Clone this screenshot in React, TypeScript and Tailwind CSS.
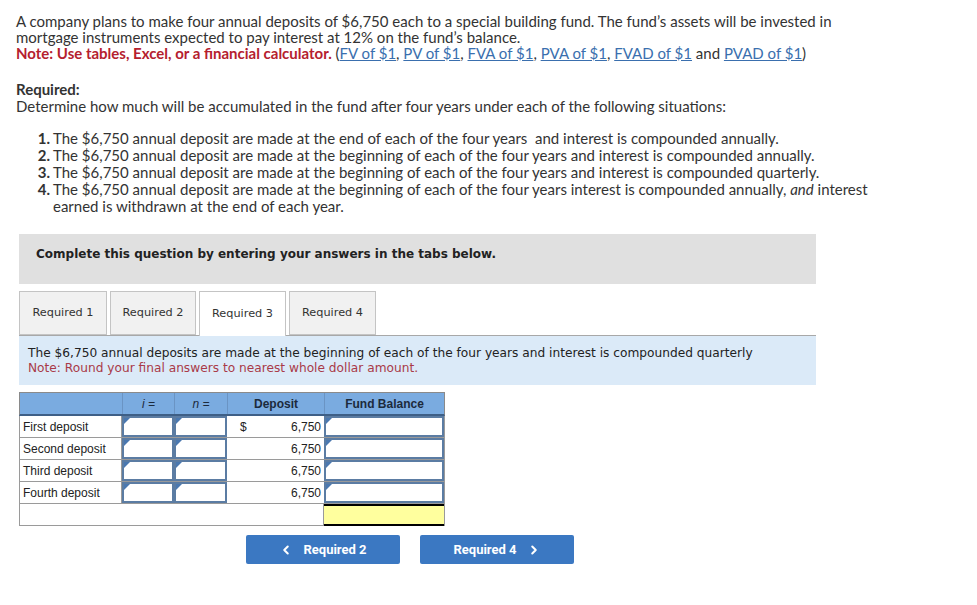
import { ChevronLeft, ChevronRight } from 'lucide-react';

const situations = [
  <>The $6,750 annual deposit are made at the end of each of the four years&nbsp; and interest is compounded annually.</>,
  <>The $6,750 annual deposit are made at the beginning of each of the four years and interest is compounded annually.</>,
  <>The $6,750 annual deposit are made at the beginning of each of the four years and interest is compounded quarterly.</>,
  <>
    The $6,750 annual deposit are made at the beginning of each of the four years interest is compounded annually, <i>and</i> interest
    <br />
    earned is withdrawn at the end of each year.
  </>,
];

const links = ['FV of $1', 'PV of $1', 'FVA of $1', 'PVA of $1', 'FVAD of $1', 'PVAD of $1'];

const rows = ['First deposit', 'Second deposit', 'Third deposit', 'Fourth deposit'];

function InputCell() {
  return (
    <div className="relative border-2 border-[#5b7ca3] bg-white">
      <div className="absolute left-0 top-0 w-0 h-0 border-t-[6px] border-t-[#4a78b0] border-r-[6px] border-r-transparent" />
    </div>
  );
}

function Tab({ label, active = false }: { label: string; active?: boolean }) {
  return (
    <div
      className={`h-[44px] flex items-center justify-center border border-[#c4c4c4] ${
        active ? 'bg-white border-b-0 h-[45px] -mb-px relative z-10' : 'bg-[#f1f1f1]'
      }`}
    >
      {label}
    </div>
  );
}

export default function App() {
  return (
    <div className="w-[977px] h-[605px] bg-white text-[#333] overflow-hidden">
      {/* problem text */}
      <div className="pl-4 pt-[13px] font-['Lato',sans-serif] text-[15px] leading-4">
        <p>
          A company plans to make four annual deposits of $6,750 each to a special building fund. The fund’s assets will be invested in
          <br />
          mortgage instruments expected to pay interest at 12% on the fund’s balance.
          <br />
          <b className="text-[#b5202e]">Note: Use tables, Excel, or a financial calculator.</b>{' '}
          (
          {links.map((l, i) => (
            <span key={l}>
              <span className="text-[#3a6fae] underline">{l}</span>
              {i < links.length - 2 ? ', ' : i === links.length - 2 ? ' and ' : ''}
            </span>
          ))}
          )
        </p>
        <p className="mt-[20px] font-bold leading-[17px]">Required:</p>
        <p className="leading-[17px]">Determine how much will be accumulated in the fund after four years under each of the following situations:</p>
        <ol className="mt-[15px] leading-[17px]">
          {situations.map((s, i) => (
            <li key={i} className="grid grid-cols-[37px_1fr]">
              <span className="font-bold text-right pr-[3px]">{i + 1}.</span>
              <span>{s}</span>
            </li>
          ))}
        </ol>
      </div>

      {/* question box */}
      <div className="ml-[19px] w-[797px] mt-[19px] h-[50px] bg-[#e0e0e0] pt-[13px] pl-[17px] font-['DejaVu_Sans',sans-serif] text-[12px] leading-[15px] font-bold text-[#222]">
        Complete this question by entering your answers in the tabs below.
      </div>

      {/* tabs */}
      <div className="ml-[19px] w-[797px] mt-[7px] flex gap-[3px] font-['DejaVu_Sans',sans-serif] text-[11.3px] text-[#333]">
        <div className="w-[88px]">
          <Tab label="Required 1" />
        </div>
        <div className="w-[86px]">
          <Tab label="Required 2" />
        </div>
        <div className="w-[87px]">
          <Tab label="Required 3" active />
        </div>
        <div className="w-[87px]">
          <Tab label="Required 4" />
        </div>
      </div>
      <div className="ml-[19px] w-[797px] h-[50px] bg-[#dbeaf8] border-t border-[#a8a8a8] pt-[10px] pl-[9px] font-['DejaVu_Sans',sans-serif] text-[12.2px] leading-[15px]">
        <p className="text-[#222]">
          The $6,750 annual deposits are made at the beginning of each of the four years and interest is compounded quarterly
        </p>
        <p className="text-[#a93a48]">Note: Round your final answers to nearest whole dollar amount.</p>
      </div>

      {/* table */}
      <div className="ml-[19px] mt-[7px] w-[426px] font-['Liberation_Sans',Arial,sans-serif] text-[12px] text-[#222]">
        <div className="grid grid-cols-[103px_52px_53px_97px_119px] h-[24px] bg-[#7aabe0] border border-[#8a8a8a] border-b-2 border-b-[#3e5f86] font-bold text-[#1c2a3c]">
          <div className="border-r border-[#6a94c4]" />
          <div className="border-r border-[#6a94c4] flex items-center justify-center font-normal italic">i =</div>
          <div className="border-r border-[#6a94c4] flex items-center justify-center font-normal italic">n =</div>
          <div className="border-r border-[#6a94c4] flex items-center justify-center">Deposit</div>
          <div className="flex items-center justify-center">Fund Balance</div>
        </div>
        {rows.map((r, i) => (
          <div key={r} className="grid grid-cols-[102px_52px_53px_97px_120px] h-[22px] border-l border-r border-b border-[#9a9a9a]">
            <div className="flex items-center pl-[3px] border-r border-[#9a9a9a]">{r}</div>
            <InputCell />
            <InputCell />
            <div className="flex items-center justify-between pl-[13px] pr-[3px]">
              <span>{i === 0 ? '$' : ''}</span>
              <span>6,750</span>
            </div>
            <InputCell />
          </div>
        ))}
        <div className="grid grid-cols-[304px_120px] h-[22px] border-l border-r border-b border-[#9a9a9a]">
          <div className="border-r border-[#9a9a9a]" />
          <div className="bg-[#ffff9e] border-t-2 border-b-2 border-black -mb-px" />
        </div>
      </div>

      {/* nav buttons */}
      <div className="ml-[246px] mt-[9px] flex gap-[20px] font-['Roboto',sans-serif] text-[13px] font-bold text-white">
        <div className="w-[154px] h-[29px] rounded-[2px] bg-[#3b78c2] flex items-center justify-center gap-[10px]">
          <ChevronLeft size={14} strokeWidth={3.5} />
          <span>Required 2</span>
        </div>
        <div className="w-[154px] h-[29px] rounded-[2px] bg-[#3b78c2] flex items-center justify-center gap-[10px]">
          <span>Required 4</span>
          <ChevronRight size={14} strokeWidth={3.5} />
        </div>
      </div>
    </div>
  );
}
